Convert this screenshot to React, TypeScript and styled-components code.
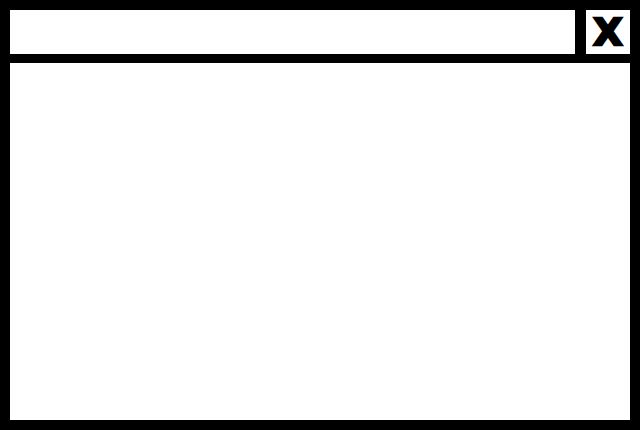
import React from 'react';
import styled, { createGlobalStyle } from 'styled-components';

const GlobalStyle = createGlobalStyle`
  html, body {
    margin: 0;
    padding: 0;
    background: #000;
  }
`;

const Window = styled.div`
  width: 640px;
  height: 430px;
  box-sizing: border-box;
  padding: 10px;
  background: #000;
  display: flex;
  flex-direction: column;
  gap: 9px;
`;

const TitleBar = styled.div`
  height: 44px;
  display: flex;
  gap: 11px;
`;

const TitleField = styled.div`
  flex: 1;
  background: #fff;
`;

const CloseButton = styled.button`
  width: 44px;
  height: 44px;
  border: none;
  padding: 0 0 1px;
  background: #fff;
  color: #000;
  font-family: "DejaVu Sans", sans-serif;
  font-weight: bold;
  font-size: 38px;
  line-height: 1;
  -webkit-text-stroke: 2.4px #000;
  display: flex;
  align-items: center;
  justify-content: center;
  cursor: pointer;
`;

const Content = styled.div`
  flex: 1;
  background: #fff;
`;

const App: React.FC = () => {
  return (
    <>
      <GlobalStyle />
      <Window>
        <TitleBar>
          <TitleField />
          <CloseButton>X</CloseButton>
        </TitleBar>
        <Content />
      </Window>
    </>
  );
};

export default App;
